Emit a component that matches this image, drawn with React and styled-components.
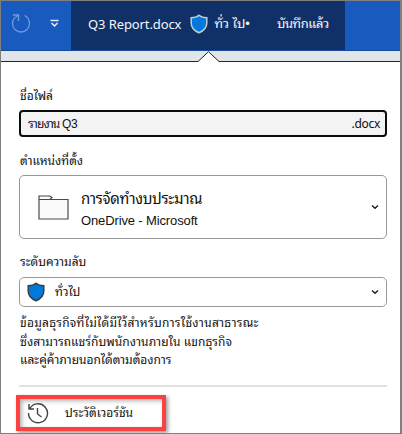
import React from 'react';
import styled, { createGlobalStyle } from 'styled-components';

const GlobalStyle = createGlobalStyle`
  * {
    box-sizing: border-box;
  }
  body {
    margin: 0;
    font-family: "Liberation Sans", "Noto Sans Thai", sans-serif;
    color: #111;
  }
`;

const Frame = styled.div`
  display: flex;
  flex-direction: column;
  width: 402px;
  height: 434px;
  border: 1px solid #7f7f7f;
  border-right-width: 2px;
  background: #fff;
  overflow: hidden;
`;

const TitleBar = styled.header`
  display: flex;
  flex: none;
  height: 50px;
  background: #185abd;
  border-bottom: 1px solid #154a9c;
`;

const QuickTools = styled.div`
  display: flex;
  align-items: center;
  width: 70px;
  padding: 0 12px 4px 10px;
  justify-content: space-between;
`;

const DocTitle = styled.div`
  display: flex;
  align-items: center;
  width: 274px;
  padding: 0 0 4px 17px;
  background: #103168;
  color: #f4f6fa;
`;

const Pointer = styled.div`
  flex: none;
  height: 11px;
  background: #e1e5ea;

  svg {
    display: block;
  }
`;

const Text = styled.span`
  flex: none;
  font-family: ${(p) => p.$font || '"Liberation Sans", "Noto Sans Thai Looped", "Loma", "Noto Sans Thai", sans-serif'};
  font-size: ${(p) => p.$size || 12}px;
  letter-spacing: ${(p) => p.$spacing || 0}px;
  line-height: ${(p) => p.$line || 18}px;
  margin-left: ${(p) => p.$left || 0}px;
  white-space: nowrap;
`;

const ShieldBox = styled.div`
  display: flex;
  flex: none;
  margin: 0 6px 0 9px;
`;

const Panel = styled.main`
  display: flex;
  flex-direction: column;
  padding: 0 13px 0 18px;
`;

const Label = styled.div`
  display: flex;
  align-items: flex-end;
  height: ${(p) => p.$height}px;
  padding: 0 0 ${(p) => p.$gap}px 1px;
`;

const NameInput = styled.div`
  display: flex;
  align-items: center;
  justify-content: space-between;
  height: 27px;
  padding: 0 5px 0 7px;
  border: 2px solid #0b0b12;
  border-radius: 4px;
  background: #f3f3f3;
`;

const Select = styled.div`
  display: flex;
  align-items: center;
  height: ${(p) => p.$height}px;
  padding: 0 7px 0 ${(p) => p.$left}px;
  border: 1px solid #999;
  border-radius: 5px;
  background: #fff;
`;

const Place = styled.div`
  display: flex;
  flex: 1;
  flex-direction: column;
  padding: 4px 0 0 12px;
`;

const Spacer = styled.div`
  flex: 1;
`;

const Description = styled.div`
  display: flex;
  flex-direction: column;
  height: 78px;
  padding: 7px 0 0 1px;
`;

const Divider = styled.div`
  height: 2px;
  background: #e1e1e1;
`;

const HistoryButton = styled.div`
  display: flex;
  align-items: center;
  width: 150px;
  height: 36px;
  margin: 8px 0 0 -3px;
  padding-left: 7px;
  border: 4px solid #fb4242;
  box-shadow: 2px 2px 4px rgba(0, 0, 0, 0.4), inset 2px 2px 4px rgba(0, 0, 0, 0.3);
`;

const Shield = ({ stroke }) => (
  <svg width="18" height="20" viewBox="0 0 18 20">
    <path
      d="M9 1.2C7 3 4.500 3.800 1.200 3.800V9c0 4.800 3 7.800 7.800 9.800 4.800-2 7.800-5 7.800-9.800V3.800C13.500 3.800 11 3 9 1.200Z"
      fill="#0078dc"
      stroke={stroke}
      strokeWidth="1.500"
    />
  </svg>
);

const Chevron = () => (
  <svg width="8" height="6" viewBox="0 0 8 6">
    <path d="M1 1.500 4 4.300 7 1.500" fill="none" stroke="#222" strokeWidth="1.500" />
  </svg>
);

const App = () => {
  return (
    <>
      <GlobalStyle />
      <Frame>
        <TitleBar>
          <QuickTools>
            <svg width="21" height="21" viewBox="0 0 21 21" fill="none" stroke="#6c9be0" strokeWidth="1.300">
              <path d="M2 2h5.500v6M7.500 2.500C3.500 4 1.500 7.500 1.500 10.500a8.500 8.500 0 0 0 17 0c0-3.500-2-6.500-5-8" />
            </svg>
            <svg width="9" height="9" viewBox="0 0 9 9" fill="none" stroke="#e8effa" strokeWidth="1.500">
              <path d="M.5 1.500h8M1.500 4l3 3 3-3" />
            </svg>
          </QuickTools>
          <DocTitle>
            <Text $size={13} $spacing={-0.1} $font='"Noto Sans", sans-serif'>Q3 Report.docx</Text>
            <ShieldBox>
              <Shield stroke="#c4ccd5" />
            </ShieldBox>
            <Text $size={13}>ทั่ว ไป•</Text>
            <Text $left={27} $size={13} $spacing={-0.4}>บันทึกแล้ว</Text>
          </DocTitle>
        </TitleBar>
        <Pointer>
          <svg width="400" height="11" viewBox="0 0 400 11">
            <path d="M197 11 207.500.500 218 11Z" fill="#fff" />
            <path d="M0 10.500H197L207.500.700 218 10.500H400" fill="none" stroke="#22242a" />
          </svg>
        </Pointer>
        <Panel>
          <Label $height={48} $gap={5}>
            <Text>ชื่อไฟล์</Text>
          </Label>
          <NameInput>
            <Text $spacing={-0.9}>
              รายงาน <Text $spacing={-0.3}>Q3</Text>
            </Text>
            <Text $spacing={-0.3} $font='"Noto Sans", sans-serif'>.docx</Text>
          </NameInput>
          <Label $height={38} $gap={5}>
            <Text>ตำแหน่งที่ตั้ง</Text>
          </Label>
          <Select $height={64} $left={18}>
            <svg width="31" height="25" viewBox="0 0 31 25" fill="#fafafa" stroke="#4a4a4a" strokeWidth="1.200">
              <path d="M1 4.500h29V24H1zM1 4.500V1h11l2 1.500-2 2H1" />
            </svg>
            <Place>
              <Text $size={15} $line={22} $spacing={-0.3}>การจัดทำงบประมาณ</Text>
              <Text $size={13} $line={21} $spacing={-0.13}>OneDrive - Microsoft</Text>
            </Place>
            <Chevron />
          </Select>
          <Label $height={38} $gap={6}>
            <Text>ระดับความลับ</Text>
          </Label>
          <Select $height={30} $left={7}>
            <Shield stroke="#3a3f45" />
            <Text $left={10}>ทั่วไป</Text>
            <Spacer />
            <Chevron />
          </Select>
          <Description>
            <Text $line={18.5} $spacing={0.26}>ข้อมูลธุรกิจที่ไม่ได้มีไว้สำหรับการใช้งานสาธารณะ</Text>
            <Text $line={18.5} $spacing={0.05}>ซึ่งสามารถแชร์กับพนักงานภายใน แขกธุรกิจ</Text>
            <Text $line={18.5} $spacing={-0.02}>และคู่ค้าภายนอกได้ตามต้องการ</Text>
          </Description>
          <Divider />
          <HistoryButton>
            <svg width="22" height="22" viewBox="0 0 22 22" fill="none" stroke="#444" strokeWidth="1.400">
              <path d="M2 2v5h5M2.500 7A9.500 9.500 0 1 1 1.500 11M10.500 6v6l4 3" />
            </svg>
            <Text $left={16}>ประวัติเวอร์ชัน</Text>
          </HistoryButton>
        </Panel>
      </Frame>
    </>
  );
};

export default App;
